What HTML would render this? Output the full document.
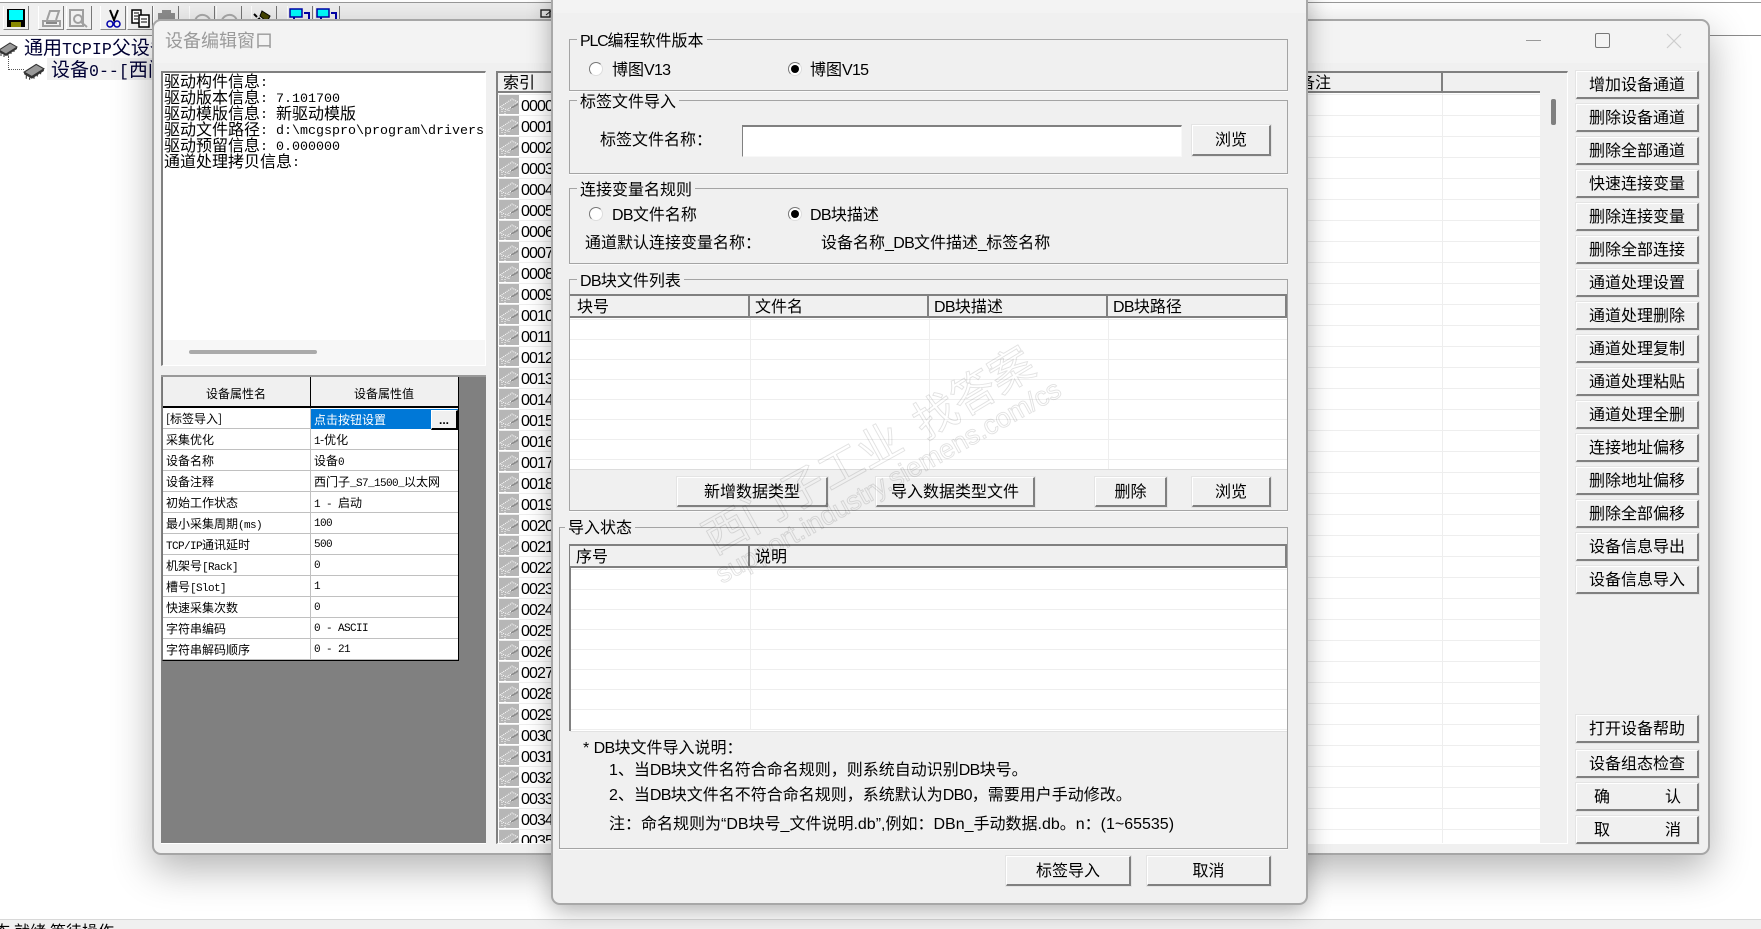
<!DOCTYPE html>
<html lang="zh"><head><meta charset="utf-8"><title>设备编辑窗口</title>
<style>
html,body{margin:0;padding:0;width:1761px;height:929px;overflow:hidden;background:#fff}
body{position:relative;font:16px/20px "Liberation Sans","WenQuanYi Zen Hei","Noto Sans CJK SC",sans-serif;color:#000}
div,pre,span.t{box-sizing:border-box}
.a{position:absolute}
.t{position:absolute;white-space:nowrap;height:20px;line-height:20px;margin-top:2px}
.m{font-family:"Liberation Mono",monospace;font-size:13.33px}
.d{letter-spacing:-.7px}
.i{position:absolute;left:164px;height:16px;line-height:16px;white-space:nowrap;font-family:"WenQuanYi Zen Hei","Noto Sans CJK SC",sans-serif}
.i .m{position:relative;top:-1px}
.s{font:12px/21px "WenQuanYi Zen Hei","Noto Sans CJK SC",sans-serif}
.s .m{font-size:11px;letter-spacing:-.6px;line-height:21px}
.b{position:absolute;background:#f0f0f0;border:solid;border-width:1px 2px 2px 1px;border-color:#fff #808080 #808080 #fff;outline:1px solid #e4e4e4;display:flex;align-items:center;justify-content:center;white-space:nowrap;padding-top:2px}
.rb{left:1576px;width:123px;height:28px}
.g{position:absolute;border:1px solid #a4a4a4;box-shadow:0 1px 0 #fafafa}
.l{position:absolute;background:#f0f0f0;padding:0 3px;white-space:nowrap;height:20px;line-height:20px;left:577px;margin-top:2px}
.r{position:absolute;width:14px;height:14px;border-radius:50%;background:#fff;border:1px solid;border-color:#777 #ddd #ddd #777}
.r.on::after{content:"";position:absolute;left:2px;top:2px;width:8px;height:8px;border-radius:50%;background:#000}
.h{position:absolute;background:#f0f0f0;border-top:2px solid #808080;border-bottom:2px solid #808080;height:24px}
.v{position:absolute;width:2px;background:#808080}
.c{position:absolute;width:1px;background:#eee}
.tb{position:absolute;top:6px;height:24px;width:26px;border-right:1px solid #777;border-left:1px solid #fff;border-bottom:1px solid #888}
.pr{position:absolute;left:162px;width:296px;height:21px;background:#fff;border-bottom:1px solid #c0c0c0}
.pr>span{position:absolute;top:0;white-space:nowrap}
.pr>span.m{top:1px}
.pr>span:first-child{left:4px}.pr>span+span{left:152px}
.tr{position:absolute;white-space:nowrap;height:22px;line-height:22px;font-size:19px;color:#003;font-family:"WenQuanYi Zen Hei","Noto Sans CJK SC",sans-serif}
.tr .m{font-size:16.6px}
</style></head><body>

<svg width="0" height="0" style="position:absolute"><defs>
<symbol id="chip" viewBox="0 0 20 16"><path d="M1 9 12 2l7 4-11 7z" fill="#999" stroke="#333"/><path d="M1 9v2l7 4 11-7V6L8 13z" fill="#333"/><path d="M3 12v3M6 14v2M10 13v2M13 11v2M16 9v2" stroke="#333"/></symbol>
<pattern id="lp" width="20" height="21" patternUnits="userSpaceOnUse"><rect y="2" width="20" height="20" fill="#b6b6b6"/><path d="M1 14 13 6l6 3-11 8z" fill="#bdbdbd" stroke="#fff" stroke-dasharray="1 1"/><path d="M3 16v3M6 18v3M10 17v2M13 15v2M16 12v2" stroke="#fff" stroke-dasharray="1 1"/><path d="M12 14 19 10v2l-7 4z" fill="#8a8a8a"/></pattern>
</defs></svg>

<!-- toolbar -->
<div class="a" style="left:0;top:0;width:560px;height:36px;background:#f0f0f0"></div>
<div class="a" style="left:0;top:0;width:1761px;height:2px;background:#fff"></div>
<div class="a" style="left:0;top:2px;width:1761px;height:1px;background:#999"></div>
<div class="a" style="left:0;top:35px;width:1761px;height:1px;background:#8a8a8a"></div>
<div class="tb" style="left:3px"></div><div class="tb" style="left:38px"></div><div class="tb" style="left:66px"></div><div class="tb" style="left:100px"></div><div class="tb" style="left:127px"></div><div class="tb" style="left:153px"></div><div class="tb" style="left:189px"></div><div class="tb" style="left:216px"></div><div class="tb" style="left:251px"></div><div class="tb" style="left:287px"></div><div class="tb" style="left:314px"></div>
<svg class="a" style="left:0;top:0" width="345" height="36">
<rect x="7" y="9" width="18" height="18" fill="#000"/><rect x="9" y="10" width="14" height="10" fill="#0ff"/><rect x="11" y="22" width="10" height="5" fill="#880"/>
<g fill="none" stroke="#a0a0a0" stroke-width="2"><path d="M43 21h17v5H43zM47 20l3-9h9l-3 9"/><path d="M46 23h11" stroke="#888"/><rect x="70" y="10" width="13" height="16"/><circle cx="78" cy="19" r="4"/><path d="M81 22l6 5"/></g>
<path d="M110 10l4 10 4-10M114 20v1" stroke="#000" stroke-width="2" fill="none"/><circle cx="110" cy="24" r="3" fill="none" stroke="#00a" stroke-width="1.5"/><circle cx="117" cy="24" r="3" fill="none" stroke="#00a" stroke-width="1.5"/>
<path d="M132 10h9v13h-9z" fill="#fff" stroke="#000" stroke-width="1.5"/><path d="M139 15h10v12h-10z" fill="#fff" stroke="#000" stroke-width="1.5"/><path d="M134 13h5M134 16h4M134 19h4M141 19h6M141 22h6" stroke="#000"/>
<rect x="158" y="13" width="17" height="14" fill="#8c8c8c"/><rect x="162" y="10" width="9" height="4" fill="#8c8c8c"/>
<path d="M195 21c2-8 12-8 15-1M222 20c3-7 13-7 15 1" fill="none" stroke="#aaa" stroke-width="2"/>
<path d="M262 11l8 5-3 6-7-6z" fill="#440" stroke="#000"/><path d="M260 18l-5 4h-2M254 14l3 3" stroke="#000" stroke-width="2" fill="none"/>
<rect x="290" y="9" width="12" height="8" fill="#0ff" stroke="#00a" stroke-width="1.5"/><path d="M294 17v7h11M304 13h5v11" fill="none" stroke="#00a" stroke-width="2"/>
<rect x="317" y="9" width="12" height="8" fill="#0ff" stroke="#00a" stroke-width="1.5"/><path d="M321 17v7h11M331 13h5v11" fill="none" stroke="#00a" stroke-width="2"/>
</svg>
<svg class="a" style="left:540px;top:7px" width="12" height="12"><rect x="1" y="3" width="9" height="7" fill="none" stroke="#222" stroke-width="1.4"/><path d="M6 8 11 4" stroke="#222"/></svg>

<!-- tree -->
<svg class="a" style="left:-2px;top:41px" width="20" height="16"><use href="#chip"/></svg>
<svg class="a" style="left:23px;top:62px" width="22" height="18"><use href="#chip"/></svg>
<div class="a" style="left:8px;top:56px;height:14px;width:16px;border-left:1px dotted #555;border-bottom:1px dotted #555"></div>
<div class="a" style="left:47px;top:58px;width:106px;height:22px;background:#f0f0f0"></div>
<div class="tr" style="left:24px;top:36px">通用<span class="m">TCPIP</span>父设备</div>
<div class="tr" style="left:51px;top:58px">设备<span class="m">0--[</span>西门</div>

<!-- status bar -->
<div class="a" style="left:0;top:919px;width:1761px;height:10px;background:#f0f0f0;border-top:1px solid #d8d8d8;overflow:hidden">
<span class="t" style="left:-6px;top:1px">态</span><span class="t" style="left:14px;top:1px">就绪,</span><span class="t" style="left:50px;top:1px">等待操作</span></div>

<!-- back dialog -->
<div class="a" style="left:152px;top:19px;width:1558px;height:836px;background:#f0f0f0;border:2px solid #a6a6a6;border-radius:9px;box-shadow:0 14px 40px rgba(0,0,0,.3)"></div>
<div class="a" style="left:154px;top:21px;width:1554px;height:42px;background:#f3f3f3;border-radius:8px 8px 0 0"></div>
<div class="t" style="left:165px;top:29px;font-size:18px;color:#9a9a9a">设备编辑窗口</div>
<div class="a" style="left:1526px;top:40px;width:15px;height:1px;background:#999"></div>
<div class="a" style="left:1595px;top:33px;width:15px;height:15px;border:1.5px solid #777;border-radius:2px"></div>
<svg class="a" style="left:1666px;top:33px" width="16" height="16"><path d="M1 1l14 14M15 1 1 15" stroke="#ccc" stroke-width="1.2"/></svg>

<!-- info text box -->
<div class="a" style="left:161px;top:71px;width:325px;height:295px;background:#f7f7f7;border-top:2px solid #808080;border-left:2px solid #808080;border-right:1px solid #fff;border-bottom:1px solid #fff"></div>
<div class="a" style="left:163px;top:73px;width:322px;height:267px;background:#fff"></div>
<div class="a" style="left:189px;top:350px;width:128px;height:4px;background:#aaa;border-radius:2px"></div>
<div class="i" style="top:72px">驱动构件信息<span class="m">:</span></div>
<div class="i" style="top:88px">驱动版本信息<span class="m">: 7.101700</span></div>
<div class="i" style="top:104px">驱动模版信息<span class="m">: </span>新驱动模版</div>
<div class="i" style="top:120px">驱动文件路径<span class="m">: d:\mcgspro\program\drivers</span></div>
<div class="i" style="top:136px">驱动预留信息<span class="m">: 0.000000</span></div>
<div class="i" style="top:152px">通道处理拷贝信息<span class="m">:</span></div>

<!-- property panel -->
<div class="a" style="left:161px;top:375px;width:325px;height:468px;background:#808080;border-top:2px solid #999"></div>
<div class="a" style="left:162px;top:377px;width:296px;height:31px;background:#f0f0f0;border-bottom:2px solid #000"></div>
<div class="t s" style="left:162px;top:381px;width:148px;text-align:center">设备属性名</div>
<div class="t s" style="left:310px;top:381px;width:148px;text-align:center">设备属性值</div>
<div class="pr s" style="top:408px"><span>[标签导入]</span></div>
<div class="pr s" style="top:429px"><span>采集优化</span><span><span class="m">1</span>-优化</span></div>
<div class="pr s" style="top:450px"><span>设备名称</span><span>设备<span class="m">0</span></span></div>
<div class="pr s" style="top:471px"><span>设备注释</span><span>西门子<span class="m">_S7_1500_</span>以太网</span></div>
<div class="pr s" style="top:492px"><span>初始工作状态</span><span><span class="m">1 - </span>启动</span></div>
<div class="pr s" style="top:513px"><span>最小采集周期<span class="m">(ms)</span></span><span class="m">100</span></div>
<div class="pr s" style="top:534px"><span><span class="m">TCP/IP</span>通讯延时</span><span class="m">500</span></div>
<div class="pr s" style="top:555px"><span>机架号<span class="m">[Rack]</span></span><span class="m">0</span></div>
<div class="pr s" style="top:576px"><span>槽号<span class="m">[Slot]</span></span><span class="m">1</span></div>
<div class="pr s" style="top:597px"><span>快速采集次数</span><span class="m">0</span></div>
<div class="pr s" style="top:618px"><span>字符串编码</span><span class="m">0 - ASCII</span></div>
<div class="pr s" style="top:639px"><span>字符串解码顺序</span><span class="m">0 - 21</span></div>
<div class="a" style="left:310px;top:377px;width:1px;height:283px;background:#c0c0c0"></div>
<div class="a" style="left:310px;top:377px;width:1px;height:31px;background:#000"></div>
<div class="a" style="left:162px;top:377px;width:297px;height:284px;border-right:1px solid #000;border-bottom:1px solid #000;border-left:1px solid #777"></div>
<div class="a s" style="left:311px;top:409px;width:147px;height:20px;background:#0078d7;color:#fff;padding-left:3px;line-height:22px">点击按钮设置</div>
<div class="a" style="left:431px;top:410px;width:27px;height:20px;background:#f0f0f0;border:1px solid;border-width:1px 2px 2px 1px;border-color:#fff #000 #000 #fff;text-align:center;font:700 12px/18px 'Liberation Sans',sans-serif">...</div>
<div class="a" style="left:161px;top:843px;width:325px;height:1px;background:#fff"></div>

<!-- channel list -->
<div class="a" style="left:496px;top:71px;width:1072px;height:773px;background:#fff;border-top:2px solid #808080;border-left:2px solid #808080;border-right:1px solid #fff;border-bottom:1px solid #fff"></div>
<div class="a" style="left:498px;top:73px;width:1043px;height:20px;background:#f0f0f0;border-bottom:2px solid #808080"></div>
<div class="t" style="left:503px;top:72px">索引</div>
<div class="a" style="left:498px;top:94px;width:1042px;height:749px;background:repeating-linear-gradient(#eee 0 1px,#fff 1px 21px)"></div>
<svg class="a" style="left:499px;top:93px" width="20" height="750"><rect width="20" height="750" fill="url(#lp)"/></svg>
<pre class="a m" style="left:521px;top:96px;margin:0;height:747px;overflow:hidden;font-size:16px;line-height:21px;font-family:'Liberation Sans',sans-serif;letter-spacing:-.9px">0000
0001
0002
0003
0004
0005
0006
0007
0008
0009
0010
0011
0012
0013
0014
0015
0016
0017
0018
0019
0020
0021
0022
0023
0024
0025
0026
0027
0028
0029
0030
0031
0032
0033
0034
0035</pre>
<div class="t" style="left:1307px;top:72px;width:24px;overflow:hidden;direction:rtl">备注</div>
<div class="v" style="left:1441px;top:73px;height:19px"></div>
<div class="c" style="left:1442px;top:93px;height:750px"></div>
<div class="a" style="left:1540px;top:73px;width:27px;height:770px;background:#f0f0f0"></div>
<div class="a" style="left:1551px;top:99px;width:5px;height:26px;background:#808080;border-radius:2px"></div>

<!-- right buttons -->
<div class="b rb" style="top:71px">增加设备通道</div>
<div class="b rb" style="top:104px">删除设备通道</div>
<div class="b rb" style="top:137px">删除全部通道</div>
<div class="b rb" style="top:170px">快速连接变量</div>
<div class="b rb" style="top:203px">删除连接变量</div>
<div class="b rb" style="top:236px">删除全部连接</div>
<div class="b rb" style="top:269px">通道处理设置</div>
<div class="b rb" style="top:302px">通道处理删除</div>
<div class="b rb" style="top:335px">通道处理复制</div>
<div class="b rb" style="top:368px">通道处理粘贴</div>
<div class="b rb" style="top:401px">通道处理全删</div>
<div class="b rb" style="top:434px">连接地址偏移</div>
<div class="b rb" style="top:467px">删除地址偏移</div>
<div class="b rb" style="top:500px">删除全部偏移</div>
<div class="b rb" style="top:533px">设备信息导出</div>
<div class="b rb" style="top:566px">设备信息导入</div>
<div class="b rb" style="top:715px">打开设备帮助</div>
<div class="b rb" style="top:750px">设备组态检查</div>
<div class="b rb" style="top:783px;justify-content:space-between;padding:2px 16px 0 17px"><span>确</span><span>认</span></div>
<div class="b rb" style="top:816px;justify-content:space-between;padding:2px 16px 0 17px"><span>取</span><span>消</span></div>

<!-- front dialog -->
<div class="a" style="left:551px;top:-12px;width:757px;height:917px;background:#f0f0f0;border:2px solid #a8a8a8;border-radius:9px;box-shadow:0 6px 24px rgba(0,0,0,.3)"></div>
<div class="a" style="left:553px;top:0;width:753px;height:13px;background:#f3f3f3"></div>

<div class="g" style="left:569px;top:39px;width:719px;height:52px"></div>
<div class="l" style="top:30px"><span style="letter-spacing:-1.2px">PLC</span>编程软件版本</div>
<div class="r" style="left:589px;top:62px"></div><div class="t" style="left:612px;top:59px">博图<span class="d">V13</span></div>
<div class="r on" style="left:788px;top:62px"></div><div class="t" style="left:810px;top:59px">博图<span class="d">V15</span></div>

<div class="g" style="left:569px;top:100px;width:719px;height:74px"></div>
<div class="l" style="top:91px">标签文件导入</div>
<div class="t" style="left:600px;top:129px">标签文件名称&#xFF1A;</div>
<div class="a" style="left:742px;top:125px;width:440px;height:32px;background:#fff;border:solid;border-width:2px 1px 1px 1px;border-color:#808080 #f8f8f8 #f8f8f8 #808080"></div>
<div class="b" style="left:1192px;top:125px;width:79px;height:31px">浏览</div>

<div class="g" style="left:569px;top:188px;width:719px;height:76px"></div>
<div class="l" style="top:179px">连接变量名规则</div>
<div class="r" style="left:589px;top:207px"></div><div class="t" style="left:612px;top:204px"><span class="d">DB</span>文件名称</div>
<div class="r on" style="left:788px;top:207px"></div><div class="t" style="left:810px;top:204px"><span class="d">DB</span>块描述</div>
<div class="t" style="left:585px;top:232px">通道默认连接变量名称&#xFF1A;</div>
<div class="t" style="left:821px;top:232px">设备名称<span class="d">_DB</span>文件描述<span class="d">_</span>标签名称</div>

<div class="g" style="left:569px;top:279px;width:719px;height:232px"></div>
<div class="l" style="top:270px"><span class="d">DB</span>块文件列表</div>
<div class="a" style="left:570px;top:294px;width:717px;height:175px;background:#fff"></div>
<div class="a" style="left:570px;top:319px;width:717px;height:150px;background:repeating-linear-gradient(#eee 0 1px,#fff 1px 20px)"></div>
<div class="c" style="left:750px;top:318px;height:151px"></div><div class="c" style="left:929px;top:318px;height:151px"></div><div class="c" style="left:1108px;top:318px;height:151px"></div>
<div class="h" style="left:570px;top:294px;width:717px"></div>
<div class="v" style="left:748px;top:294px;height:24px"></div><div class="v" style="left:927px;top:294px;height:24px"></div><div class="v" style="left:1106px;top:294px;height:24px"></div><div class="v" style="left:1285px;top:294px;height:24px"></div>
<div class="t" style="left:577px;top:296px">块号</div><div class="t" style="left:755px;top:296px">文件名</div><div class="t" style="left:934px;top:296px"><span class="d">DB</span>块描述</div><div class="t" style="left:1113px;top:296px"><span class="d">DB</span>块路径</div>
<div class="a" style="left:570px;top:469px;width:717px;height:1px;background:#dcdcdc"></div>
<div class="b" style="left:677px;top:477px;width:151px;height:30px">新增数据类型</div>
<div class="b" style="left:876px;top:477px;width:159px;height:30px">导入数据类型文件</div>
<div class="b" style="left:1095px;top:477px;width:72px;height:30px">删除</div>
<div class="b" style="left:1192px;top:477px;width:79px;height:30px">浏览</div>

<div class="g" style="left:559px;top:527px;width:729px;height:322px"></div>
<div class="l" style="top:517px;left:565px">导入状态</div>
<div class="a" style="left:569px;top:544px;width:718px;height:187px;background:#fff;border-left:2px solid #808080"></div>
<div class="a" style="left:571px;top:569px;width:716px;height:162px;background:repeating-linear-gradient(#eee 0 1px,#fff 1px 20px)"></div>
<div class="c" style="left:750px;top:568px;height:162px"></div>
<div class="h" style="left:570px;top:544px;width:717px"></div>
<div class="v" style="left:748px;top:544px;height:24px"></div><div class="v" style="left:1285px;top:544px;height:24px"></div>
<div class="t" style="left:576px;top:546px">序号</div><div class="t" style="left:755px;top:546px">说明</div>
<div class="a" style="left:570px;top:731px;width:717px;height:1px;background:#e2e2e2"></div>

<div class="t" style="left:583px;top:737px">* <span class="d">DB</span>块文件导入说明&#xFF1A;</div>
<div class="t" style="left:609px;top:759px">1、当<span class="d">DB</span>块文件名符合命名规则&#xFF0C;则系统自动识别<span class="d">DB</span>块号。</div>
<div class="t" style="left:609px;top:784px">2、当<span class="d">DB</span>块文件名不符合命名规则&#xFF0C;系统默认为<span class="d">DB0</span>&#xFF0C;需要用户手动修改。</div>
<div class="t" style="left:609px;top:813px">注&#xFF1A;命名规则为“DB块号_文件说明.db”,例如&#xFF1A;DBn_手动数据.db。n&#xFF1A;(1~65535)</div>

<div class="b" style="left:1006px;top:856px;width:125px;height:30px">标签导入</div>
<div class="b" style="left:1147px;top:856px;width:124px;height:30px">取消</div>

<!-- watermark -->
<svg class="a" style="left:0;top:0;pointer-events:none;mix-blend-mode:multiply" width="1761" height="929">
<g fill="none" stroke="#e2e2e2" stroke-width=".9">
<text transform="translate(714 555) rotate(-29)" font-size="44" font-family="'Noto Sans CJK SC',sans-serif">西门子工业</text>
<text transform="translate(925 440) rotate(-31)" font-size="44" font-family="'Noto Sans CJK SC',sans-serif">找答案</text>
<text transform="translate(722 584) rotate(-29)" font-size="27" textLength="390" font-family="'Liberation Sans',sans-serif">support.industry.siemens.com/cs</text>
</g></svg>
</body></html>
